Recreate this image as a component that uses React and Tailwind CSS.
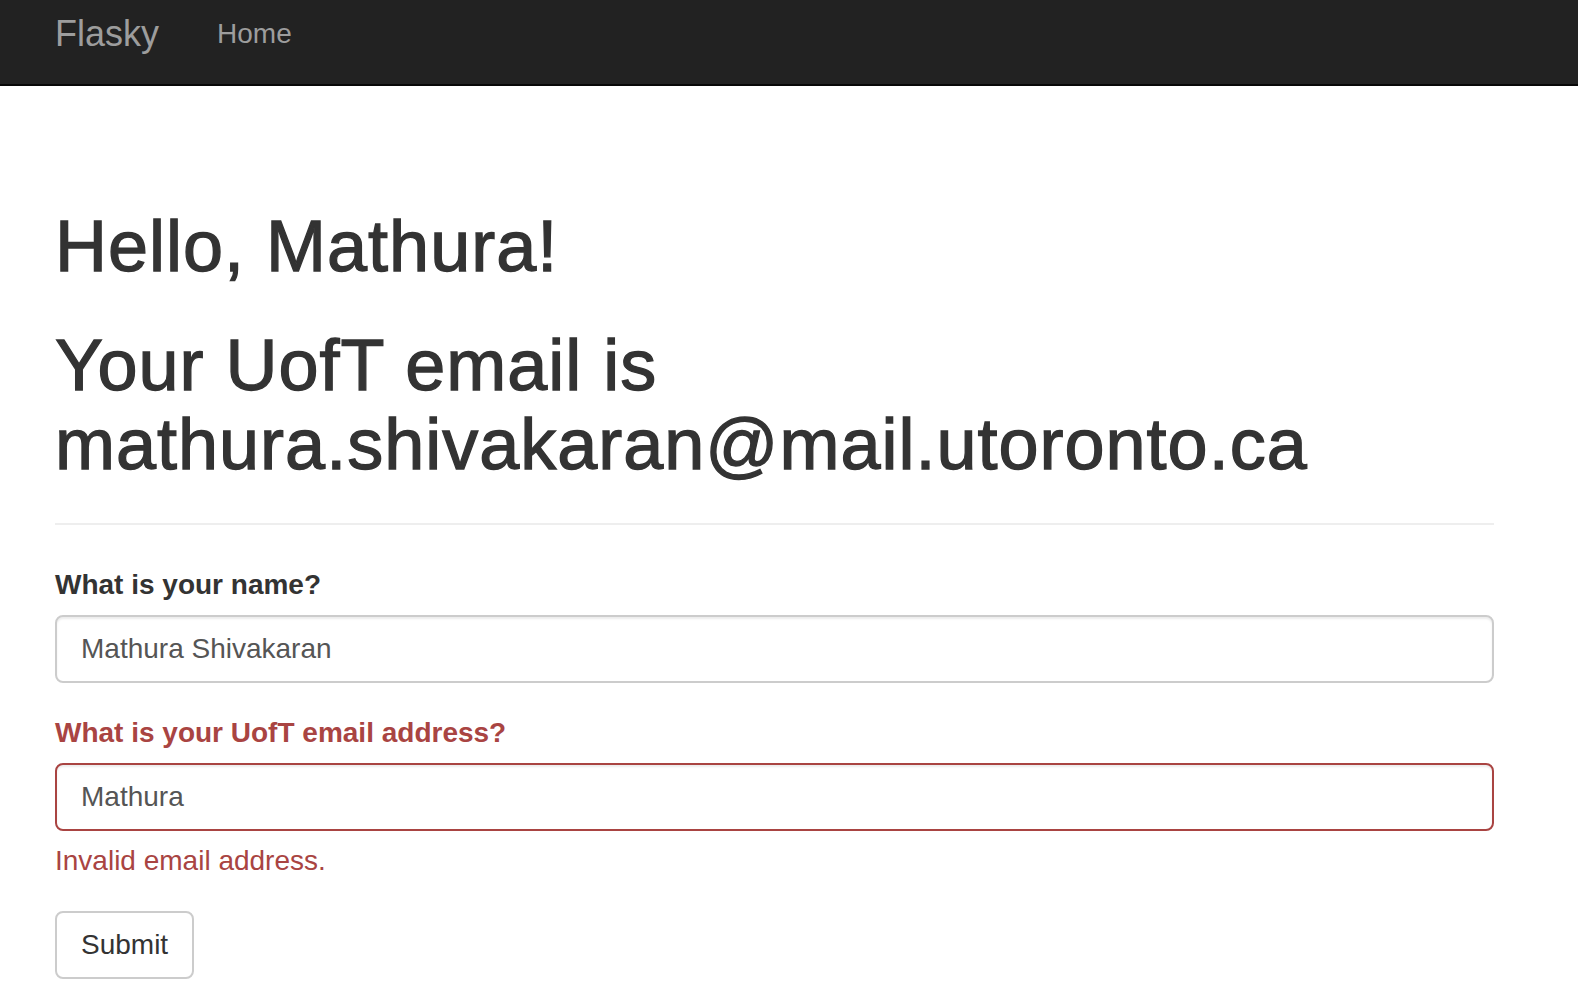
import React from "react";

function NavBar() {
    return (
        <nav className="h-[86px] bg-[#222] border-b-2 border-[#080808] pl-[55px] flex items-start">
            <a href="#" className="mt-[16px] text-[36px] leading-[36px] text-[#9d9d9d]">
                Flasky
            </a>
            <a href="#" className="ml-[58px] mt-[20px] text-[28px] leading-[28px] text-[#9d9d9d]">
                Home
            </a>
        </nav>
    );
}

function Field({ label, value, error }) {
    const tone = error ? "text-[#a94442]" : "text-[#333]";
    const border = error ? "border-[#a94442]" : "border-[#ccc]";
    return (
        <div className="mb-[30px]">
            <label className={`block font-bold text-[28px] leading-[40px] mb-[10px] ${tone}`}>
                {label}
            </label>
            <input
                type="text"
                defaultValue={value}
                className={`block w-full h-[68px] px-[24px] border-2 ${border} rounded-[8px] text-[28px] text-[#555] bg-white shadow-[inset_0_2px_2px_rgba(0,0,0,0.075)] outline-none`}
            />
            {error && (
                <p className="mt-[10px] text-[28px] leading-[40px] text-[#a94442]">{error}</p>
            )}
        </div>
    );
}

export default function App() {
    const heading = "text-[72px] leading-[79.2px] font-medium tracking-[1px] [-webkit-text-stroke:1.3px_#333]";
    return (
        <div className="min-h-screen bg-white text-[#333] font-['Liberation_Sans',Arial,sans-serif]">
            <NavBar />

            <main className="pl-[55px] pr-[84px]">
                {/* Greeting */}
                <div className="pt-[121px] pb-[38px] border-b-2 border-[#eee]">
                    <h1 className={heading}>Hello, Mathura!</h1>
                    <h1 className={`mt-[40px] ${heading}`}>
                        Your UofT email is mathura.shivakaran@mail.utoronto.ca
                    </h1>
                </div>

                {/* Form */}
                <form className="pt-[40px]" onSubmit={(e) => e.preventDefault()}>
                    <Field label="What is your name?" value="Mathura Shivakaran" />
                    <Field
                        label="What is your UofT email address?"
                        value="Mathura"
                        error="Invalid email address."
                    />
                    <button
                        type="submit"
                        className="h-[68px] px-[24px] border-2 border-[#ccc] rounded-[8px] bg-white text-[28px] text-[#333]"
                    >
                        Submit
                    </button>
                </form>
            </main>
        </div>
    );
}
